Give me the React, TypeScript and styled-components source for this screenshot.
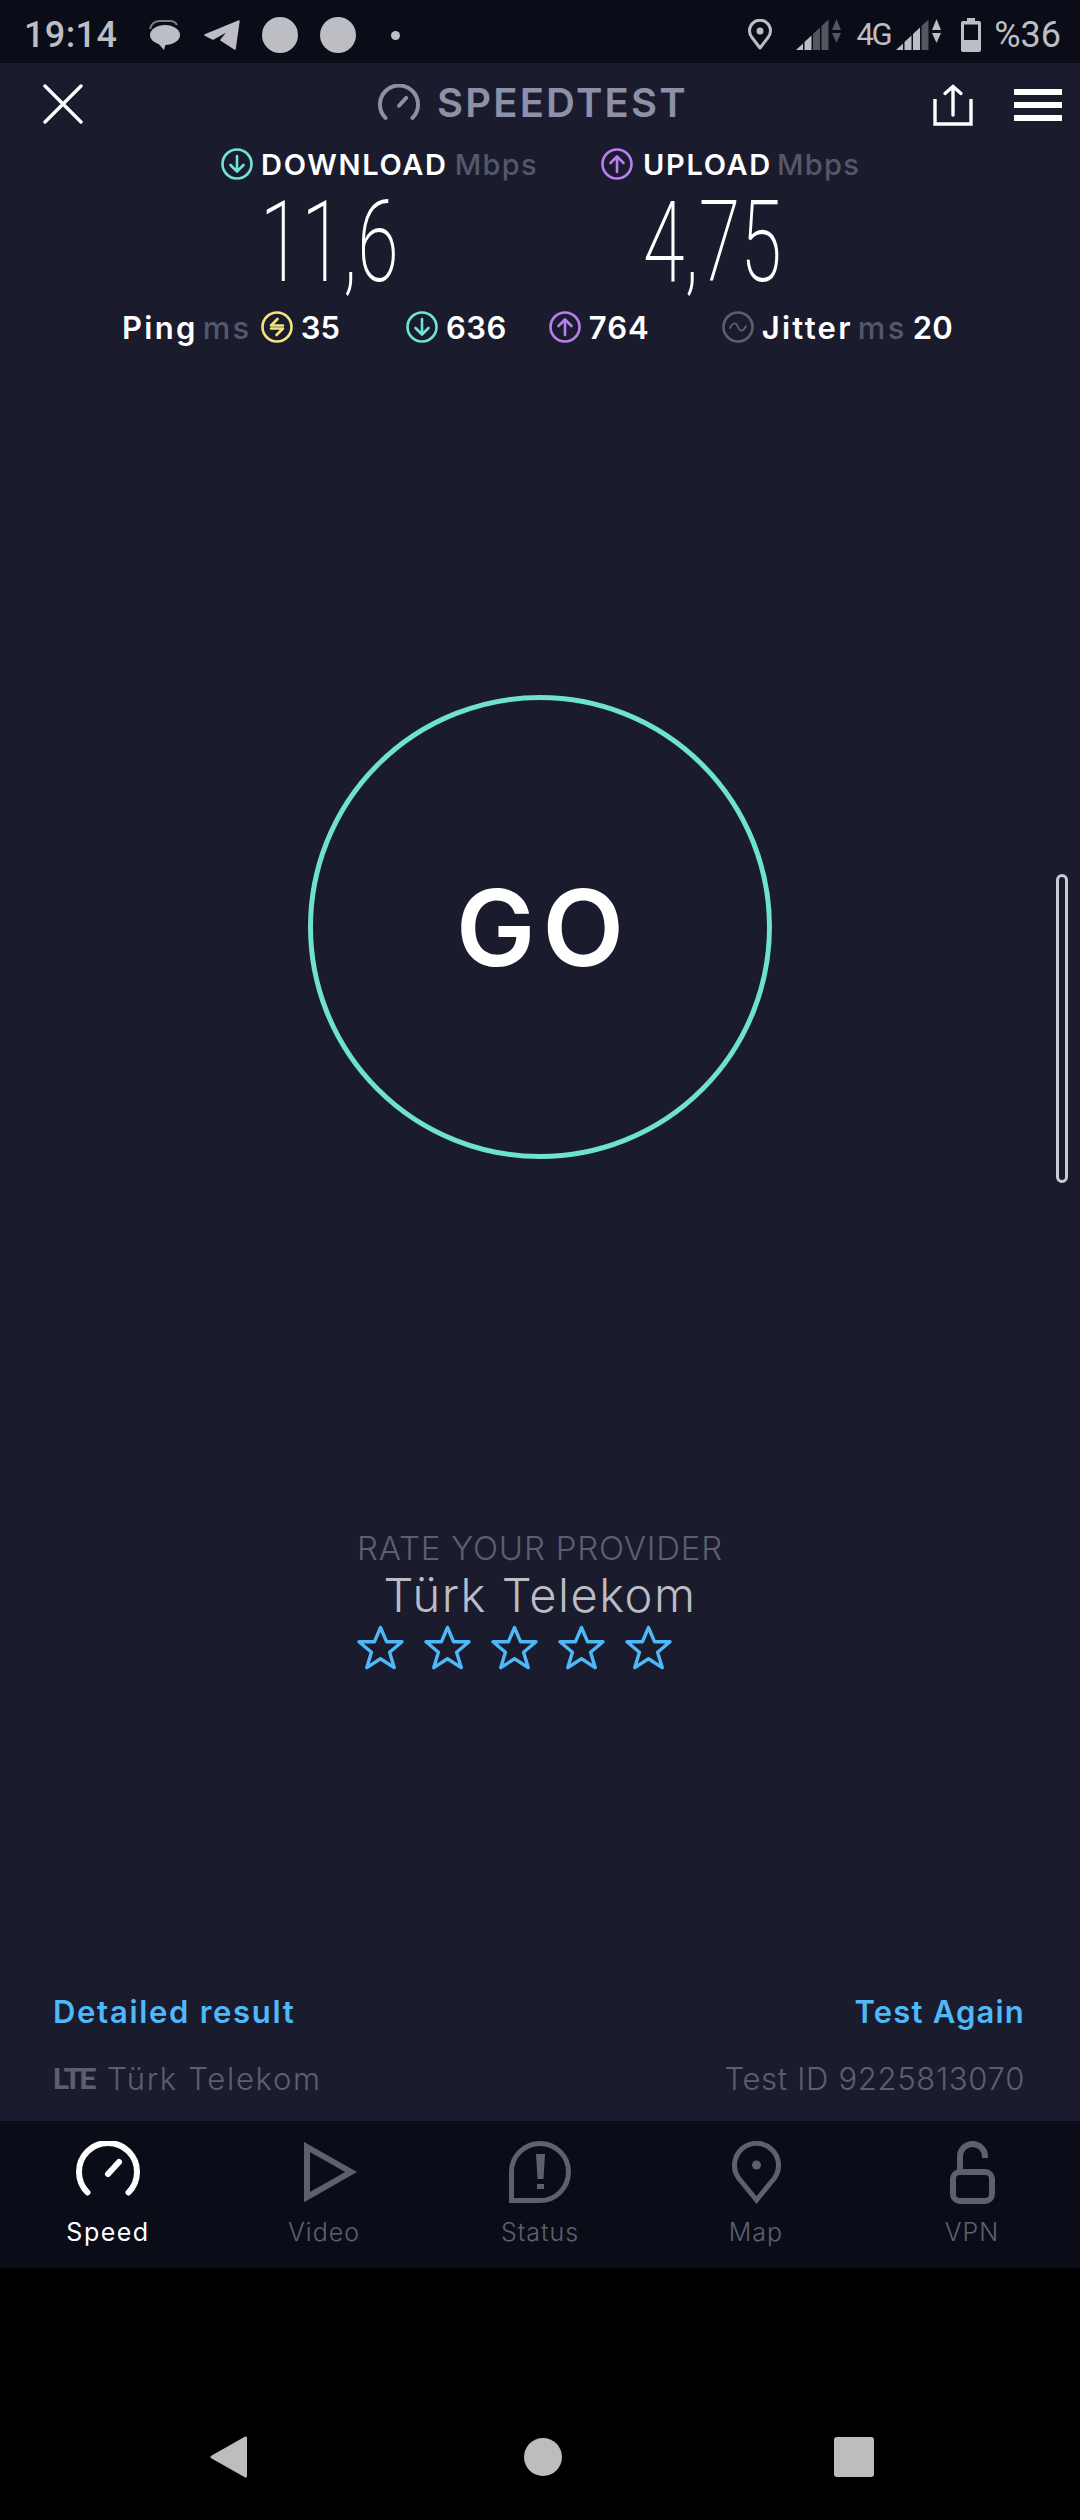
import React from "react";
import styled, { createGlobalStyle } from "styled-components";

const GlobalStyle = createGlobalStyle`
  html, body {
    margin: 0;
    padding: 0;
    background: #000;
  }
  * {
    box-sizing: border-box;
  }
`;

const Screen = styled.div`
  width: 1080px;
  height: 2520px;
  display: flex;
  flex-direction: column;
  overflow: hidden;
  background: #000;
  font-family: Inter, "Liberation Sans", sans-serif;
  color: #fff;
`;

const StatusBar = styled.div`
  height: 63px;
  flex: none;
  display: flex;
  align-items: center;
  justify-content: space-between;
  padding: 7px 19px 0 24px;
  background: #0a0c18;
  color: #bdbdc4;
  font-family: Roboto, sans-serif;
`;

const StatusGroup = styled.div`
  display: flex;
  align-items: center;
`;

const StatusText = styled.span<{ $size?: number; $ml?: number; $ls?: number; $weight?: number }>`
  font-size: ${(p) => p.$size ?? 36}px;
  font-weight: ${(p) => p.$weight ?? 400};
  line-height: 40px;
  margin-left: ${(p) => p.$ml ?? 0}px;
  letter-spacing: ${(p) => p.$ls ?? 0}px;
`;

const StatusIcon = styled.svg<{ $ml: number }>`
  display: block;
  flex: none;
  margin-left: ${(p) => p.$ml}px;
`;

const Dot = styled.div`
  width: 9px;
  height: 9px;
  margin-left: 35px;
  border-radius: 50%;
  background: #bdbdc4;
`;

const Disc = styled.div<{ $ml: number }>`
  width: 36px;
  height: 36px;
  margin-left: ${(p) => p.$ml}px;
  border-radius: 50%;
  background: #bdbdc4;
`;

const Main = styled.div`
  flex: 1;
  position: relative;
  display: flex;
  flex-direction: column;
  background: #1a1c2e;
`;

const Header = styled.div`
  height: 85px;
  flex: none;
  display: grid;
  grid-template-columns: 335px 555px 81px 1fr;
  align-items: start;
  padding: 21px 0 0 43px;
`;

const Logo = styled.div`
  display: flex;
  align-items: center;
  gap: 17px;
`;

const LogoText = styled.span`
  font-size: 40px;
  line-height: 36px;
  font-weight: 600;
  letter-spacing: 2.2px;
  color: #8e90a6;
`;

const Burger = styled.div`
  width: 48px;
  margin-top: 5px;
  display: flex;
  flex-direction: column;
  gap: 7px;
`;

const BurgerBar = styled.div`
  height: 6px;
  background: #fff;
`;

const SpeedRow = styled.div`
  display: grid;
  grid-template-columns: 380px 1fr;
  padding-left: 221px;
`;

const SpeedLabel = styled.div`
  height: 32px;
  display: flex;
  align-items: center;
  font-size: 29px;
  font-weight: 600;
`;

const LabelWord = styled.span<{ $ml: number; $ls: number }>`
  margin-left: ${(p) => p.$ml}px;
  letter-spacing: ${(p) => p.$ls}px;
`;

const Dim = styled.span<{ $ml: number; $ls?: number }>`
  margin-left: ${(p) => p.$ml}px;
  letter-spacing: ${(p) => p.$ls ?? 0}px;
  color: #55576a;
  font-weight: 500;
`;

const SpeedValue = styled.div<{ $ml: number }>`
  height: 120px;
  margin: 3px 0 0 ${(p) => p.$ml}px;
  font-family: Roboto, sans-serif;
  font-size: 113px;
  font-weight: 200;
  line-height: 120px;
  white-space: nowrap;
  transform: scaleX(0.667);
  transform-origin: left center;
`;

const StatsRow = styled.div`
  display: flex;
  align-items: center;
  height: 32px;
  margin-top: 8px;
  padding-left: 122px;
  font-size: 31px;
  font-weight: 600;
`;

const Stat = styled.div<{ $ml?: number }>`
  display: flex;
  align-items: center;
  margin-left: ${(p) => p.$ml ?? 0}px;
`;

const StatWord = styled.span<{ $ml?: number; $ls?: number }>`
  margin-left: ${(p) => p.$ml ?? 0}px;
  letter-spacing: ${(p) => p.$ls ?? 0}px;
`;

const GoRing = styled.div`
  width: 464px;
  height: 464px;
  flex: none;
  align-self: center;
  margin-top: 352px;
  display: flex;
  align-items: center;
  justify-content: center;
  padding-left: 7px;
  border: 5px solid #6ee1d1;
  border-radius: 50%;
  font-size: 106px;
  font-weight: 600;
  letter-spacing: 7px;
`;

const Scrollbar = styled.div`
  position: absolute;
  top: 811px;
  right: 12px;
  width: 12px;
  height: 309px;
  border: 3px solid #c8cad4;
  border-radius: 6px;
`;

const Rate = styled.div`
  margin-top: 371px;
  display: flex;
  flex-direction: column;
  align-items: center;
`;

const RateTitle = styled.div`
  font-size: 33px;
  line-height: 36px;
  font-weight: 300;
  letter-spacing: 0.8px;
  color: #5d5f71;
`;

const Provider = styled.div`
  margin-top: 1px;
  font-size: 47px;
  line-height: 56px;
  font-weight: 300;
  letter-spacing: 1.5px;
  color: #bcbcc4;
`;

const Stars = styled.div`
  align-self: flex-start;
  display: flex;
  gap: 20px;
  margin: 2px 0 0 357px;
`;

const Footer = styled.div`
  margin-top: auto;
  padding: 0 55px 24px 53px;
  display: flex;
  flex-direction: column;
  gap: 29px;
`;

const FooterRow = styled.div`
  display: flex;
  align-items: center;
  justify-content: space-between;
  height: 38px;
`;

const Link = styled.span<{ $ls: number }>`
  font-size: 31px;
  font-weight: 600;
  letter-spacing: ${(p) => p.$ls}px;
  color: #4fb8f9;
`;

const Muted = styled.span<{ $ls: number }>`
  font-size: 31px;
  font-weight: 300;
  letter-spacing: ${(p) => p.$ls}px;
  color: #5d5f71;
`;

const Network = styled.span`
  display: inline-flex;
  align-items: center;
  gap: 13px;
`;

const Lte = styled.span`
  font-family: Roboto, sans-serif;
  font-size: 30px;
  font-weight: 700;
  letter-spacing: -2.5px;
  color: #5d5f71;
`;

const Nav = styled.nav`
  height: 147px;
  flex: none;
  display: flex;
  background: #0a0c18;
`;

const NavItem = styled.div<{ $active?: boolean }>`
  flex: 1;
  display: flex;
  flex-direction: column;
  align-items: center;
  color: ${(p) => (p.$active ? "#fff" : "#5e6070")};
`;

const NavIcon = styled.div<{ $ml?: number }>`
  height: 95px;
  display: flex;
  align-items: flex-start;
  padding-top: 20px;
  margin-left: ${(p) => p.$ml ?? 0}px;
`;

const NavLabel = styled.span<{ $active?: boolean }>`
  font-size: 25px;
  line-height: 32px;
  font-weight: ${(p) => (p.$active ? 400 : 300)};
  letter-spacing: ${(p) => (p.$active ? 1.5 : 1)}px;
`;

const SoftKeys = styled.div`
  height: 252px;
  flex: none;
  display: grid;
  grid-template-columns: 314px 310px auto;
  align-items: center;
  justify-content: start;
  padding: 126px 0 0 210px;
  background: #000;
`;

const HomeKey = styled.div`
  width: 38px;
  height: 38px;
  border-radius: 50%;
  background: #bdbdbd;
`;

const RecentKey = styled.div`
  width: 40px;
  height: 40px;
  border-radius: 3px;
  background: #bdbdbd;
`;

const Signal = ({ ml, lit, arrows }: { ml: number; lit: number; arrows: string }) => {
  const bars = [0, 8.5, 17, 25.5];
  return (
    <StatusIcon $ml={ml} width="45" height="32" viewBox="0 0 45 32">
      {bars.map((x, i) => {
        const top = (v: number) => 31 - (v / 33) * 31;
        return (
          <polygon
            key={x}
            points={`${x},31 ${x},${top(x)} ${x + 7},${top(x + 7)} ${x + 7},31`}
            fill={i < lit ? "#bdbdc4" : "#55555f"}
          />
        );
      })}
      <polygon points="40.5,0 45,11 36,11" fill={arrows} />
      <polygon points="36,14 45,14 40.5,24" fill={arrows} />
    </StatusIcon>
  );
};

const Gauge = ({ width, height, stroke, color }: { width: number; height: number; stroke: number; color: string }) => (
  <svg width={width} height={height} viewBox="0 0 64 56" fill="none" stroke={color} strokeLinecap="round">
    <path d="M11.5 51.5A29 29 0 1 1 52.5 51.5" strokeWidth={stroke} />
    <path d="M32 33L43 21" strokeWidth={stroke} />
  </svg>
);

const RingIcon = ({ color, kind, ml }: { color: string; kind: "down" | "up" | "ping" | "jitter"; ml?: number }) => {
  const glyph = {
    down: "M16 8V23M9.5 17L16 23.5L22.5 17",
    up: "M16 24V9M9.5 15L16 8.5L22.5 15",
    ping: "M22 14.5H10L16.5 8M10 17.5H22L15.5 24",
    jitter: "M8 17C11 11 14 11 16 16C18 21 21 21 24 15",
  }[kind];
  return (
    <StatusIcon $ml={ml ?? 0} width="32" height="32" viewBox="0 0 32 32" fill="none" stroke={color} strokeWidth="2.6" strokeLinecap="round" strokeLinejoin="round">
      <circle cx="16" cy="16" r="14.5" />
      <path d={glyph} strokeWidth={kind === "jitter" ? 1.8 : 2.6} />
    </StatusIcon>
  );
};

const Star = () => (
  <svg width="47" height="45" viewBox="0 0 47 45" fill="none" stroke="#4fb8f9" strokeWidth="3.4" strokeLinejoin="round">
    <polygon points="23.5,2.5 29.6,16.8 45,16.8 32.6,27.3 37.2,42.6 23.5,33.8 9.8,42.6 14.4,27.3 2,16.8 17.4,16.8" />
  </svg>
);

const App = () => {
  return (
    <Screen>
      <GlobalStyle />
      <StatusBar>
        <StatusGroup>
          <StatusText $size={36} $ls={0.4} $weight={500}>19:14</StatusText>
          <StatusIcon $ml={31} width="32" height="31" viewBox="0 0 32 31" fill="#bdbdc4">
            <path d="M2 9Q4 1 12 1H22Q27 1 29 5" fill="none" stroke="#7d7d85" strokeWidth="2" />
            <ellipse cx="17" cy="15" rx="15" ry="10" />
            <polygon points="9,22 16,30 18,23" />
          </StatusIcon>
          <StatusIcon $ml={24} width="36" height="31" viewBox="0 0 36 31" fill="#bdbdc4" stroke="#bdbdc4" strokeWidth="1.5" strokeLinejoin="round">
            <polygon points="1,15 35,1 31,29 17,20 25,10 9,19" />
          </StatusIcon>
          <Disc $ml={22} />
          <Disc $ml={22} />
          <Dot />
        </StatusGroup>
        <StatusGroup>
          <StatusIcon $ml={0} width="24" height="32" viewBox="0 0 24 32" fill="none" stroke="#bdbdc4" strokeWidth="3">
            <path d="M12 29L4 18.5A10.5 10.5 0 1 1 20 18.5Z" strokeLinejoin="round" />
            <circle cx="12" cy="12" r="3.5" fill="#bdbdc4" stroke="none" />
          </StatusIcon>
          <Signal ml={24} lit={2} arrows="#55555f" />
          <StatusText $size={31} $ml={16} $ls={-2.5}>4G</StatusText>
          <Signal ml={6} lit={3} arrows="#bdbdc4" />
          <StatusIcon $ml={20} width="20" height="34" viewBox="0 0 20 34" fill="#bdbdc4">
            <path d="M6 0H14V3H18Q20 3 20 5V32Q20 34 18 34H2Q0 34 0 32V5Q0 3 2 3H6ZM3 6.5V22H17V6.5Z" fillRule="evenodd" />
          </StatusIcon>
          <StatusText $ml={13}>%36</StatusText>
        </StatusGroup>
      </StatusBar>

      <Main>
        <Header>
          <svg width="40" height="40" viewBox="0 0 40 40" stroke="#fff" strokeWidth="3.4" strokeLinecap="round">
            <path d="M2 2L38 38M38 2L2 38" />
          </svg>
          <Logo>
            <Gauge width={42} height={37} stroke={6} color="#8e90a6" />
            <LogoText>SPEEDTEST</LogoText>
          </Logo>
          <svg width="40" height="42" viewBox="0 0 40 42" fill="none" stroke="#fff" strokeWidth="3.4" strokeLinecap="round">
            <path d="M2 15V40H38V15" strokeLinecap="butt" />
            <path d="M20 3V31M12 9.5L20 2.5L28 9.5" />
          </svg>
          <Burger>
            <BurgerBar />
            <BurgerBar />
            <BurgerBar />
          </Burger>
        </Header>

        <SpeedRow>
          <div>
            <SpeedLabel>
              <RingIcon kind="down" color="#6fe5d9" />
              <LabelWord $ml={8} $ls={1.7}>DOWNLOAD</LabelWord>
              <Dim $ml={7} $ls={1.3}>Mbps</Dim>
            </SpeedLabel>
            <SpeedValue $ml={39}>11,6</SpeedValue>
          </div>
          <div>
            <SpeedLabel>
              <RingIcon kind="up" color="#b87ff0" />
              <LabelWord $ml={10} $ls={1.7}>UPLOAD</LabelWord>
              <Dim $ml={5} $ls={1.3}>Mbps</Dim>
            </SpeedLabel>
            <SpeedValue $ml={42}>4,75</SpeedValue>
          </div>
        </SpeedRow>

        <StatsRow>
          <Stat>
            <StatWord $ls={2.3}>Ping</StatWord>
            <Dim $ml={5} $ls={2.4}>ms</Dim>
            <RingIcon kind="ping" color="#f5e37e" ml={9} />
            <StatWord $ml={8}>35</StatWord>
          </Stat>
          <Stat $ml={66}>
            <RingIcon kind="down" color="#6fe5d9" />
            <StatWord $ml={8} $ls={0.5}>636</StatWord>
          </Stat>
          <Stat $ml={42}>
            <RingIcon kind="up" color="#b87ff0" />
            <StatWord $ml={8} $ls={1}>764</StatWord>
          </Stat>
          <Stat $ml={72}>
            <RingIcon kind="jitter" color="#5d5f70" />
            <StatWord $ml={8} $ls={2.3}>Jitter</StatWord>
            <Dim $ml={5} $ls={2.4}>ms</Dim>
            <StatWord $ml={6}>20</StatWord>
          </Stat>
        </StatsRow>

        <GoRing>GO</GoRing>
        <Scrollbar />

        <Rate>
          <RateTitle>RATE YOUR PROVIDER</RateTitle>
          <Provider>Türk Telekom</Provider>
          <Stars>
            {[0, 1, 2, 3, 4].map((i) => (
              <Star key={i} />
            ))}
          </Stars>
        </Rate>

        <Footer>
          <FooterRow>
            <Link $ls={1.7}>Detailed result</Link>
            <Link $ls={1.2}>Test Again</Link>
          </FooterRow>
          <FooterRow>
            <Network>
              <Lte>LTE</Lte>
              <Muted $ls={1.7}>Türk Telekom</Muted>
            </Network>
            <Muted $ls={0.7}>Test ID 9225813070</Muted>
          </FooterRow>
        </Footer>
      </Main>

      <Nav>
        <NavItem $active>
          <NavIcon>
            <Gauge width={64} height={56} stroke={6} color="#fff" />
          </NavIcon>
          <NavLabel $active>Speed</NavLabel>
        </NavItem>
        <NavItem>
          <NavIcon $ml={12}>
            <svg width="53" height="62" viewBox="0 0 53 62" fill="none" stroke="currentColor" strokeWidth="6">
              <polygon points="3,6 47,31 3,56" />
            </svg>
          </NavIcon>
          <NavLabel>Video</NavLabel>
        </NavItem>
        <NavItem>
          <NavIcon>
            <svg width="63" height="62" viewBox="0 0 63 62" fill="none" stroke="currentColor" strokeWidth="5">
              <path d="M2.5 59.5V31A28.5 28.5 0 1 1 31 59.5Z" />
              <path d="M27 13H36L34.5 38H28.5ZM28 43H35V48H28Z" fill="currentColor" stroke="none" />
            </svg>
          </NavIcon>
          <NavLabel>Status</NavLabel>
        </NavItem>
        <NavItem>
          <NavIcon>
            <svg width="49" height="63" viewBox="0 0 49 63" fill="none" stroke="currentColor" strokeWidth="5">
              <path d="M24.5 59L6.5 37A22 22 0 1 1 42.5 37Z" />
              <circle cx="24.5" cy="24" r="4.5" fill="currentColor" stroke="none" />
            </svg>
          </NavIcon>
          <NavLabel>Map</NavLabel>
        </NavItem>
        <NavItem>
          <NavIcon>
            <svg width="45" height="63" viewBox="0 0 45 63" fill="none" stroke="currentColor" strokeWidth="6">
              <rect x="3" y="31" width="39" height="29" rx="7" />
              <path d="M10 31V15.5A12.5 12.5 0 0 1 35 15.5V17" />
            </svg>
          </NavIcon>
          <NavLabel>VPN</NavLabel>
        </NavItem>
      </Nav>

      <SoftKeys>
        <svg width="37" height="42" viewBox="0 0 37 42" fill="#bdbdbd" stroke="#bdbdbd" strokeWidth="3" strokeLinejoin="round">
          <polygon points="2,21 35.5,2 35.5,40" />
        </svg>
        <HomeKey />
        <RecentKey />
      </SoftKeys>
    </Screen>
  );
};

export default App;
